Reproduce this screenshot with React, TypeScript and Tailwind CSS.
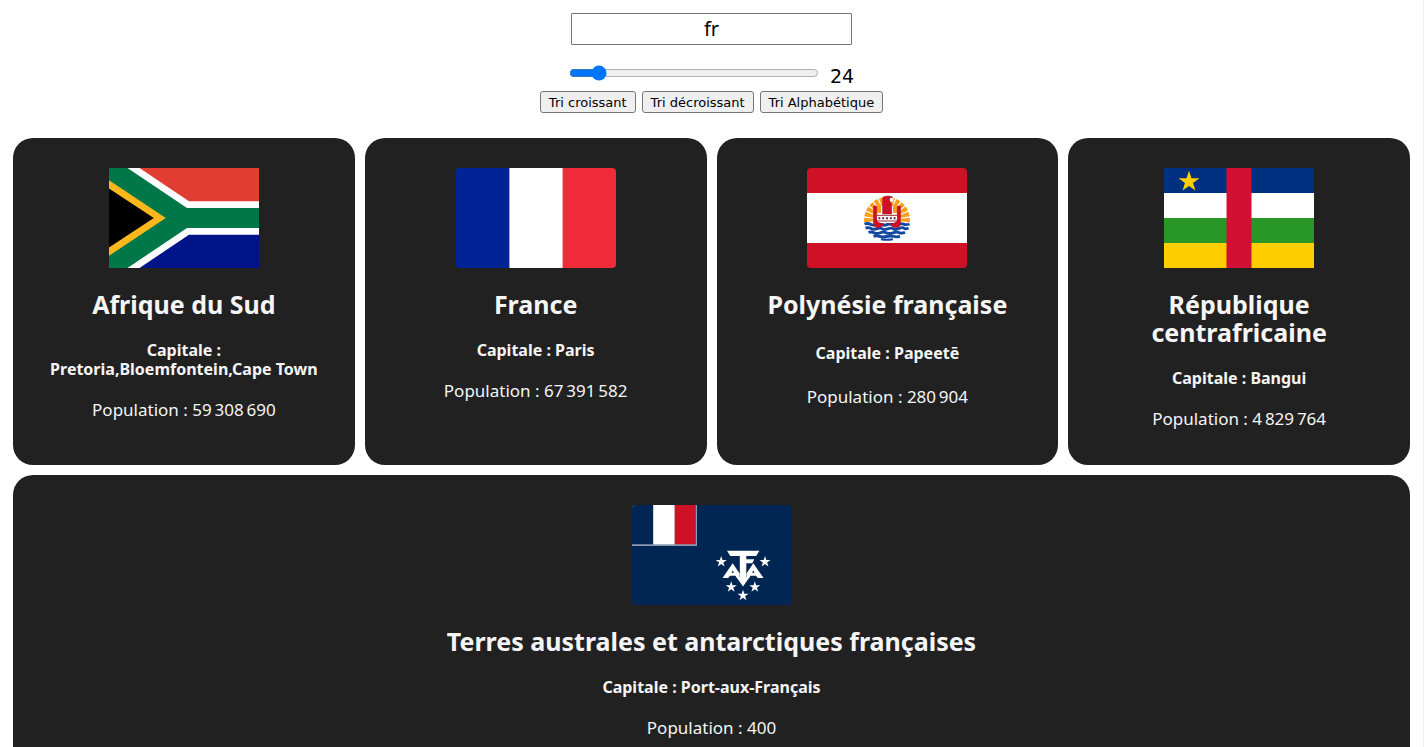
import { useState, type ReactNode } from "react";

type Country = {
  name: string;
  capital: string;
  population: number;
  flag: ReactNode;
  tallCapital?: boolean;
};

function starPoints(cx: number, cy: number, r: number) {
  return Array.from({ length: 10 }, (_, i) => {
    const radius = i % 2 ? r * 0.382 : r;
    const angle = -Math.PI / 2 + (i * Math.PI) / 5;
    return `${(cx + radius * Math.cos(angle)).toFixed(2)},${(cy + radius * Math.sin(angle)).toFixed(2)}`;
  }).join(" ");
}

function SouthAfricaFlag() {
  return (
    <svg viewBox="0 0 150 100" className="h-[100px] w-[150px]" role="img" aria-label="Afrique du Sud">
      <path fill="#fff" d="M0 0h150v100H0z" />
      <path fill="#e23d32" d="M30.500 0H150V33.300H80z" />
      <path fill="#001489" d="M30.500 100H150V66.700H80z" />
      <path fill="#007749" d="M0 0h18.500l59.500 40h72v20H78l-59.500 40H0z" />
      <path fill="#ffb81c" d="M0 12.200 56.800 50 0 87.800z" />
      <path fill="#000" d="M0 20.500 44.800 50 0 79.500z" />
    </svg>
  );
}

function FranceFlag() {
  return (
    <svg viewBox="0 0 160 100" className="h-[100px] w-[160px] rounded" role="img" aria-label="France">
      <path fill="#fff" d="M50 0h60v100H50z" />
      <path fill="#002496" d="M0 0h53.400v100H0z" />
      <path fill="#ef2b3a" d="M106.600 0H160v100h-53.400z" />
    </svg>
  );
}

function PolynesiaFlag() {
  const rays = Array.from({ length: 13 }, (_, i) => {
    const center = Math.PI + (i * Math.PI) / 12;
    const point = (a: number, r: number) => `${(80 + r * Math.cos(a)).toFixed(2)} ${(52 + r * Math.sin(a)).toFixed(2)}`;
    const start = center - 0.1;
    const end = center + 0.1;
    return `M${point(start, 8)}L${point(start, 23)}L${point(end, 23)}L${point(end, 8)}Z`;
  }).join("");
  return (
    <svg viewBox="0 0 160 100" className="h-[100px] w-[160px] rounded" role="img" aria-label="Polynésie française">
      <path fill="#ce1126" d="M0 0h160v100H0z" />
      <path fill="#fff" d="M0 25h160v50H0z" />
      <path fill="#ff9d1c" d={rays} />
      <g fill="none" stroke="#1448a0" strokeWidth="2.900">
        <path d="M57.500 56q3.500-1.200 6 .3t6 .2 5.500 0 5 .1 5.500 0 5.500-.1 5.500-.3 6-.2" />
        <path d="M58.500 60.200q3-1.200 5.500.3t6 .2 5 .1 5.500 0 5.500 0 5.500-.2 5.500-.4 4.500-.2" />
        <path d="M61.500 64.500q3-1.200 5.500.2t6 .1 6.500 0 6.500 0 6-.2 6-.2" />
        <path d="M66.500 68.300q3-1 6 .1t7 .1 7-.1 6.500-.1" />
        <path strokeWidth="2" d="M74 71.300q6 1 12 0" />
      </g>
      <path fill="#fff" d="M70 38h20v17H70z" />
      <path fill="#ff9d1c" d="m70 38 4-2v9h-4zM90 38l-4-2v9h4z" />
      <path fill="#ce1126" stroke="#8f1020" strokeWidth=".4" d="M75.500 46V30q0-1.500 4.500-2 4-.3 6 1.300-3 .5-3.300 3 0 2.200 2 3.500V46z" />
      <path fill="#ce1126" stroke="#8f1020" strokeWidth=".4" d="M66.500 38h3.200v13q.8 3.500 4 4.500l3.200.2q-2 3.800-5.500 4.100-4.400.2-4.900-4.200zM93.500 38h-3.200v13q-.8 3.500-4 4.500l-3.200.2q2 3.800 5.500 4.100 4.400.2 4.900-4.200z" />
      <path fill="#fff" d="M70.500 47h19v7h-19z" />
      <path stroke="#8f1020" strokeWidth=".9" d="M70 47.300h20M70 53h20" />
      <path stroke="#5c1420" strokeWidth="2" strokeDasharray="1.800 2" d="M71.500 50.200h17.500" />
      <circle cx="84.700" cy="31.800" r="2" fill="#fff" />
    </svg>
  );
}

function CentralAfricaFlag() {
  return (
    <svg viewBox="0 0 150 100" className="h-[100px] w-[150px]" role="img" aria-label="République centrafricaine">
      <path fill="#003082" d="M0 0h150v25H0z" />
      <path fill="#fff" d="M0 25h150v25H0z" />
      <path fill="#289728" d="M0 50h150v25H0z" />
      <path fill="#ffce00" d="M0 75h150v25H0z" />
      <path fill="#d21034" d="M62.500 0h25v100h-25z" />
      <polygon fill="#ffce00" points={starPoints(25, 13.7, 11)} />
    </svg>
  );
}

function SouthernLandsFlag() {
  const stars = [
    [89.2, 56.8],
    [133, 56.8],
    [99.2, 82],
    [122.8, 82],
    [111, 90.5],
  ];
  return (
    <svg viewBox="0 0 160 100" className="h-[100px] w-[160px] rounded" role="img" aria-label="Terres australes et antarctiques françaises">
      <path fill="#002653" d="M0 0h160v100H0z" />
      <path fill="#8b9ab2" d="M0 0h65v41H0z" />
      <path fill="#002653" d="M0 0h21.300v39.300H0z" />
      <path fill="#fff" d="M21.300 0h21.400v39.300H21.300z" />
      <path fill="#ce1126" d="M42.700 0h21.100v39.300H42.700z" />
      <g fill="#fff">
        <path d="M95 45.700h32.500l-3.300 5.400H98.300z" />
        <path d="M107.800 50h6.500v4.200h8l-2 4h-6V72h3.400L111 81.500 104.300 72h3.500z" />
        <path fillRule="evenodd" d="M90.500 73 100.700 58.300l6.900 10.200V73h-2.600l-1.600-2.300h-5.400L96.200 73zM99.500 67.700h2.500l-1.300-2.200z" />
        <path fillRule="evenodd" d="M131.500 73 121.300 58.300l-6.800 10.200V73h2.500l1.600-2.300h5.400l1.800 2.300zM120 67.700h2.500l-1.200-2.200z" />
        {stars.map(([x, y]) => (
          <polygon key={`${x}-${y}`} points={starPoints(x, y, 5.8)} />
        ))}
      </g>
    </svg>
  );
}

const countries: Country[] = [
  { name: "Afrique du Sud", capital: "Pretoria,Bloemfontein,Cape Town", population: 59308690, flag: <SouthAfricaFlag /> },
  { name: "France", capital: "Paris", population: 67391582, flag: <FranceFlag /> },
  { name: "Polynésie française", capital: "Papeetē", population: 280904, flag: <PolynesiaFlag />, tallCapital: true },
  { name: "République centrafricaine", capital: "Bangui", population: 4829764, flag: <CentralAfricaFlag /> },
  { name: "Terres australes et antarctiques françaises", capital: "Port-aux-Français", population: 400, flag: <SouthernLandsFlag /> },
];

function formatPopulation(value: number) {
  return String(value).replace(/\B(?=(\d{3})+$)/g, "\u202f");
}

function CountryCard({ country }: { country: Country }) {
  return (
    <li className="flex min-w-[300px] flex-1 basis-[300px] flex-col items-center rounded-[20px] bg-[#212121] px-[30px] pt-[30px] pb-[37px] text-center text-[#f5f5f5]">
      {country.flag}
      <h2 className="mt-[22px] text-[25px] leading-7 font-bold">{country.name}</h2>
      <h4 className={`mt-[23px] text-[16px] font-bold ${country.tallCapital ? "leading-[25px]" : "leading-[19px]"}`}>
        Capitale : {country.capital}
      </h4>
      <p className="mt-[21px] text-[17px] leading-[19px]">Population : {formatPopulation(country.population)}</p>
    </li>
  );
}

const buttonClass =
  "h-[22px] rounded-[3px] border border-[#767676] bg-[#efefef] px-2 pt-px text-[13px] leading-4 hover:bg-[#e5e5e5]";

export default function App() {
  const [search, setSearch] = useState("fr");
  const [limit, setLimit] = useState(24);
  const [sort, setSort] = useState("");

  const shown = countries
    .filter((c) => c.name.toLowerCase().includes(search.toLowerCase()))
    .sort((a, b) => {
      if (sort === "asc") return a.population - b.population;
      if (sort === "desc") return b.population - a.population;
      return a.name.localeCompare(b.name, "fr");
    })
    .slice(0, limit);

  return (
    <main className="min-h-screen border-r border-[#f0f0f0] bg-white px-[13px] py-[13px] font-['Noto_Sans',sans-serif] text-black">
      <div className="flex flex-col items-center">
        <input
          type="text"
          aria-label="Rechercher un pays"
          value={search}
          onChange={(e) => setSearch(e.target.value)}
          className="h-8 w-[281px] rounded-[1px] border border-[#767676] bg-white pb-0.5 text-center text-[20px] leading-7 outline-none"
        />
        <div className="mt-5 flex h-[26px] gap-[11px] font-['DejaVu_Sans',sans-serif]">
          <input
            id="limit"
            type="range"
            min={1}
            max={240}
            value={limit}
            onChange={(e) => setLimit(Number(e.target.value))}
            className="h-4 w-[250px] accent-[#0075ff]"
          />
          <label htmlFor="limit" className="text-[19px] leading-[22px]">
            {limit}
          </label>
        </div>
        <div className="flex gap-1.5 font-['DejaVu_Sans',sans-serif]">
          <button type="button" className={buttonClass} onClick={() => setSort("asc")}>
            Tri croissant
          </button>
          <button type="button" className={buttonClass} onClick={() => setSort("desc")}>
            Tri décroissant
          </button>
          <button type="button" className={buttonClass} onClick={() => setSort("alpha")}>
            Tri Alphabétique
          </button>
        </div>
      </div>
      <ul className="mt-[25px] flex flex-wrap gap-[10px]">
        {shown.map((country) => (
          <CountryCard key={country.name} country={country} />
        ))}
      </ul>
    </main>
  );
}
